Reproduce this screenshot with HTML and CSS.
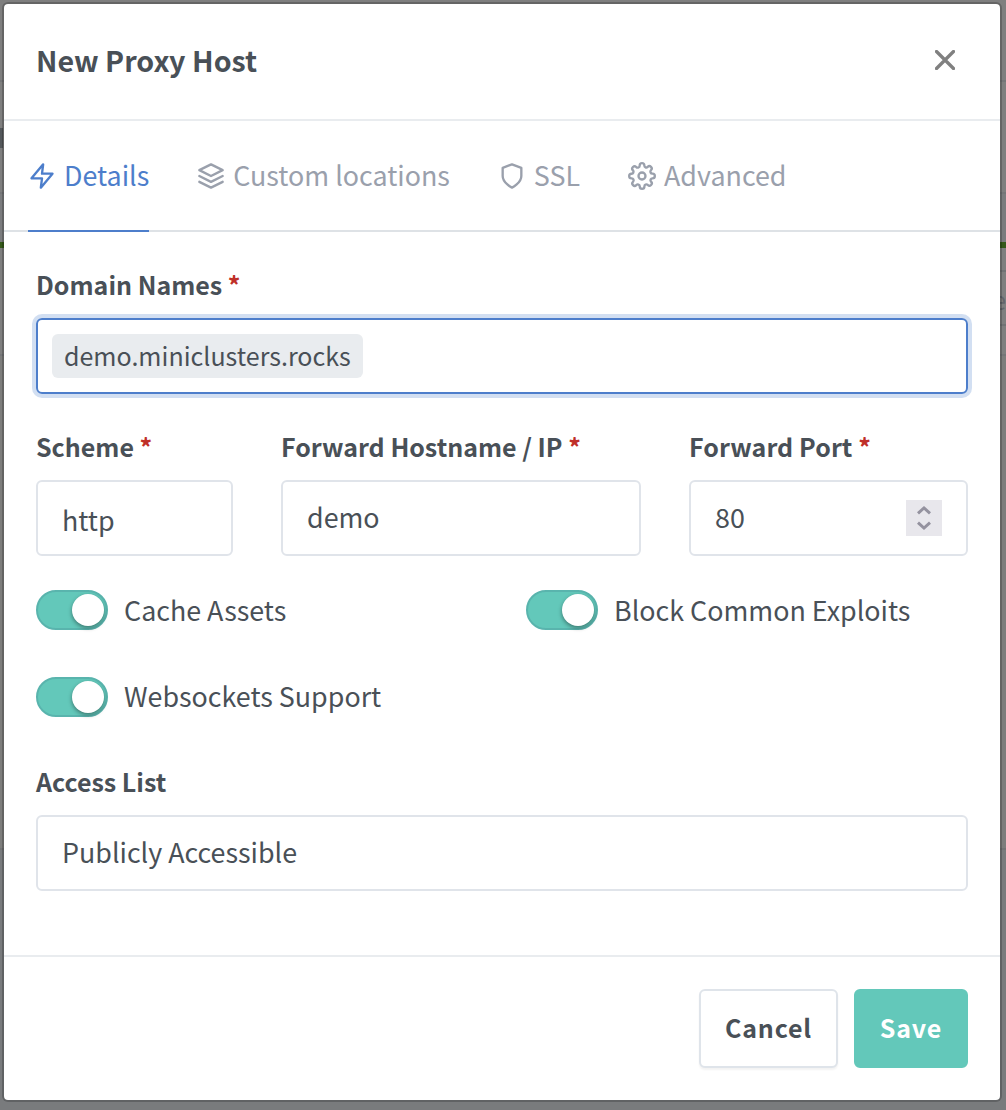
FILE: index.html
```
<!DOCTYPE html>
<html lang="en">
<head>
<meta charset="utf-8">
<title>New Proxy Host</title>
<link rel="stylesheet" href="styles.css">
</head>
<body>
<div class="page" aria-hidden="true">
  <div class="page-top"></div>
  <div class="page-nav"><span class="page-mark"></span></div>
  <div class="page-gap"></div>
  <div class="page-accent"></div>
  <div class="page-head"></div>
  <div class="page-row"><span>e</span></div>
  <div class="page-foot"></div>
  <div class="page-rest"></div>
</div>
<form class="modal">
  <header class="modal-header">
    <h1 class="modal-title">New Proxy Host</h1>
    <button class="close" type="button" aria-label="Close"><svg width="20" height="20" viewBox="0 0 20 20"><path d="M1.5 1.5l17 17M18.5 1.5l-17 17"/></svg></button>
  </header>
  <nav class="tabs">
    <a class="tab active"><svg class="icon" viewBox="0 0 24 24"><path d="M13 2L3 14h9l-1 8 10-12h-9z"/></svg><span>Details</span></a>
    <a class="tab"><svg class="icon" viewBox="0 0 24 24"><path d="M12 2L2 7l10 5 10-5zM2 17l10 5 10-5M2 12l10 5 10-5"/></svg><span>Custom locations</span></a>
    <a class="tab"><svg class="icon" viewBox="0 0 24 24"><path d="M12 22s8-4 8-10V5l-8-3-8 3v7c0 6 8 10 8 10z"/></svg><span>SSL</span></a>
    <a class="tab"><svg class="icon" viewBox="0 0 24 24"><circle cx="12" cy="12" r="3"/><path d="M19.4 15a1.65 1.65 0 0 0 .33 1.82l.06.06a2 2 0 0 1-2.83 2.83l-.06-.06a1.65 1.65 0 0 0-1.82-.33 1.65 1.65 0 0 0-1 1.51V21a2 2 0 0 1-4 0v-.09A1.65 1.65 0 0 0 9 19.4a1.65 1.65 0 0 0-1.82.33l-.06.06a2 2 0 0 1-2.83-2.83l.06-.06a1.65 1.65 0 0 0 .33-1.82 1.65 1.65 0 0 0-1.51-1H3a2 2 0 0 1 0-4h.09A1.65 1.65 0 0 0 4.6 9a1.65 1.65 0 0 0-.33-1.82l-.06-.06a2 2 0 0 1 2.83-2.83l.06.06a1.65 1.65 0 0 0 1.82.33H9a1.65 1.65 0 0 0 1-1.51V3a2 2 0 0 1 4 0v.09a1.65 1.65 0 0 0 1 1.51 1.65 1.65 0 0 0 1.82-.33l.06-.06a2 2 0 0 1 2.83 2.83l-.06.06a1.65 1.65 0 0 0-.33 1.82V9a1.65 1.65 0 0 0 1.51 1H21a2 2 0 0 1 0 4h-.09a1.65 1.65 0 0 0-1.51 1z"/></svg><span>Advanced</span></a>
  </nav>
  <div class="modal-body">
    <div class="field">
      <label class="label">Domain Names <span class="req">*</span></label>
      <div class="control focused"><span class="tag">demo.miniclusters.rocks</span></div>
    </div>
    <div class="row">
      <div class="field">
        <label class="label">Scheme <span class="req">*</span></label>
        <div class="control select">http</div>
      </div>
      <div class="field">
        <label class="label">Forward Hostname / IP <span class="req">*</span></label>
        <div class="control">demo</div>
      </div>
      <div class="field">
        <label class="label port">Forward Port <span class="req">*</span></label>
        <div class="control number"><span>80</span><span class="spinner"><svg width="36" height="36" viewBox="0 0 36 36"><path d="M12 13.3l6-5.3 6 5.3M12 22.7l6 5.3 6-5.3"/></svg></span></div>
      </div>
    </div>
    <div class="switches">
      <label class="switch"><span class="track"><span class="knob"></span></span><span>Cache Assets</span></label>
      <label class="switch"><span class="track"><span class="knob"></span></span><span>Block Common Exploits</span></label>
      <label class="switch"><span class="track"><span class="knob"></span></span><span class="raised">Websockets Support</span></label>
    </div>
    <div class="field">
      <label class="label">Access List</label>
      <div class="control">Publicly Accessible</div>
    </div>
  </div>
  <footer class="modal-footer">
    <button class="btn cancel" type="button">Cancel</button>
    <button class="btn save" type="button">Save</button>
  </footer>
</form>
</body>
</html>
```

FILE: styles.css
```
* { box-sizing: border-box; }

body {
  margin: 0;
  width: 1006px;
  height: 1110px;
  overflow: hidden;
  position: relative;
  background: #7c7d7e;
  color: #495057;
  font-family: "Noto Sans CJK SC", "Noto Sans", sans-serif;
  font-size: 26.85px;
}

/* Dimmed page behind the dialog */
.page { display: flex; flex-direction: column; height: 1110px; background: #7f7f7f; }
.page-top { height: 82px; border-bottom: 2px solid #757678; }
.page-nav { height: 112px; padding-top: 46px; border-bottom: 2px solid #757678; }
.page-mark { display: block; width: 3px; height: 20px; background: #54585b; }
.page-gap { height: 48px; background: #7b7c7e; }
.page-accent { height: 6px; background: #35591a; }
.page-head, .page-row { margin-left: 900px; border-bottom: 2px solid #717375; }
.page-head { height: 24px; }
.page-row { height: 54px; text-align: right; color: #63666b; font-size: 25px; line-height: 54px; }
.page-foot { height: 30px; border-bottom: 2px solid #757678; }
.page-rest { height: 494px; border-bottom: 2px solid #737475; background: #7d7d7c; }
.page::after { content: ""; flex: 1; background: #797b7d; }

/* Dialog */
.modal {
  position: absolute;
  left: 2px;
  top: 2px;
  width: 1000px;
  height: 1100px;
  display: flex;
  flex-direction: column;
  background: #fff;
  background-clip: padding-box;
  border: 2px solid rgba(0, 0, 0, .2);
  border-radius: 6px;
}

.modal-header {
  height: 117px;
  padding: 0 45px 4px 32px;
  display: flex;
  align-items: center;
  justify-content: space-between;
  border-bottom: 2px solid #e9ecef;
}
.modal-title { margin: 0; font-size: 28.6px; line-height: 40px; font-weight: 700; }
.close { display: flex; padding: 1px 0 0; border: 0; background: none; }
.close svg { fill: none; stroke: #808080; stroke-width: 3.3; stroke-linecap: round; }

.tabs {
  height: 111px;
  padding: 0 24px;
  display: flex;
  gap: 48px;
  border-bottom: 2px solid #dee2e6;
  color: #9aa0ac;
}
.tab {
  display: flex;
  align-items: center;
  gap: 8px;
  height: 111px;
  line-height: 40px;
  border-bottom: 2px solid transparent;
}
.tab span { padding-bottom: 1px; }
.tab.active { color: #4d7ecb; border-color: #4d7ecb; }
.icon {
  width: 28px;
  height: 28px;
  flex: none;
  fill: none;
  stroke: currentColor;
  stroke-width: 2;
  stroke-linecap: round;
  stroke-linejoin: round;
}

.modal-body { height: 723px; padding: 36px 32px 0; }
.label {
  display: block;
  height: 50px;
  line-height: 32px;
  font-size: 25px;
  font-weight: 700;
  white-space: nowrap;
}
.label.port { letter-spacing: .08px; }
.req { color: #bf3029; }
.control {
  height: 76px;
  padding: 0 24px 2px;
  display: flex;
  align-items: center;
  line-height: 72px;
  border: 2px solid #e0e4ea;
  border-radius: 6px;
}
.control.select { padding-top: 3px; padding-bottom: 0; }
.control.number { justify-content: space-between; padding-bottom: 0; }
.control.number > span:first-child { padding-bottom: 2px; line-height: 70px; }
.control.focused {
  padding: 0 14px;
  border-color: #4d7ecb;
  box-shadow: 0 0 0 4px rgba(77, 126, 203, .25);
}
.tag {
  height: 44px;
  padding: 0 12px;
  line-height: 42px;
  font-size: 25.03px;
  background: #e9ecef;
  border-radius: 6px;
}
.row { display: grid; grid-template-columns: 197px 360px 279px; gap: 48px; margin-top: 36px; }
.spinner { display: flex; background: #e8e7ec; }
.spinner svg { fill: none; stroke: #94929f; stroke-width: 3; }

.switches {
  display: grid;
  grid-template-columns: 490px 1fr;
  row-gap: 47px;
  margin: 34px 0 48px;
}
.switch { display: flex; align-items: center; gap: 16px; height: 40px; line-height: 40px; white-space: nowrap; }
.raised { padding-bottom: 2px; }
.track {
  width: 72px;
  height: 40px;
  padding: 2px;
  display: flex;
  justify-content: flex-end;
  background: #63c8ba;
  border: 2px solid #59b4ad;
  border-radius: 20px;
}
.knob { width: 32px; height: 32px; border-radius: 50%; background: #fff; box-shadow: 0 2px 4px rgba(0, 0, 0, .4); }

.modal-footer {
  flex: 1;
  padding: 32px 32px 0;
  display: flex;
  justify-content: flex-end;
  gap: 16px;
  border-top: 2px solid #e9ecef;
}
.btn {
  height: 79px;
  padding: 0 0 4px;
  font: 700 25px/40px "Noto Sans CJK SC", "Noto Sans", sans-serif;
  letter-spacing: .85px;
  border-radius: 6px;
}
.cancel { width: 139px; color: #495057; background: #fff; border: 2px solid #dfe4ea; box-shadow: 0 2px 2px rgba(0, 0, 0, .05); }
.save { width: 114px; color: #fff; background: #63c8ba; border: 2px solid #63c8ba; }
```
